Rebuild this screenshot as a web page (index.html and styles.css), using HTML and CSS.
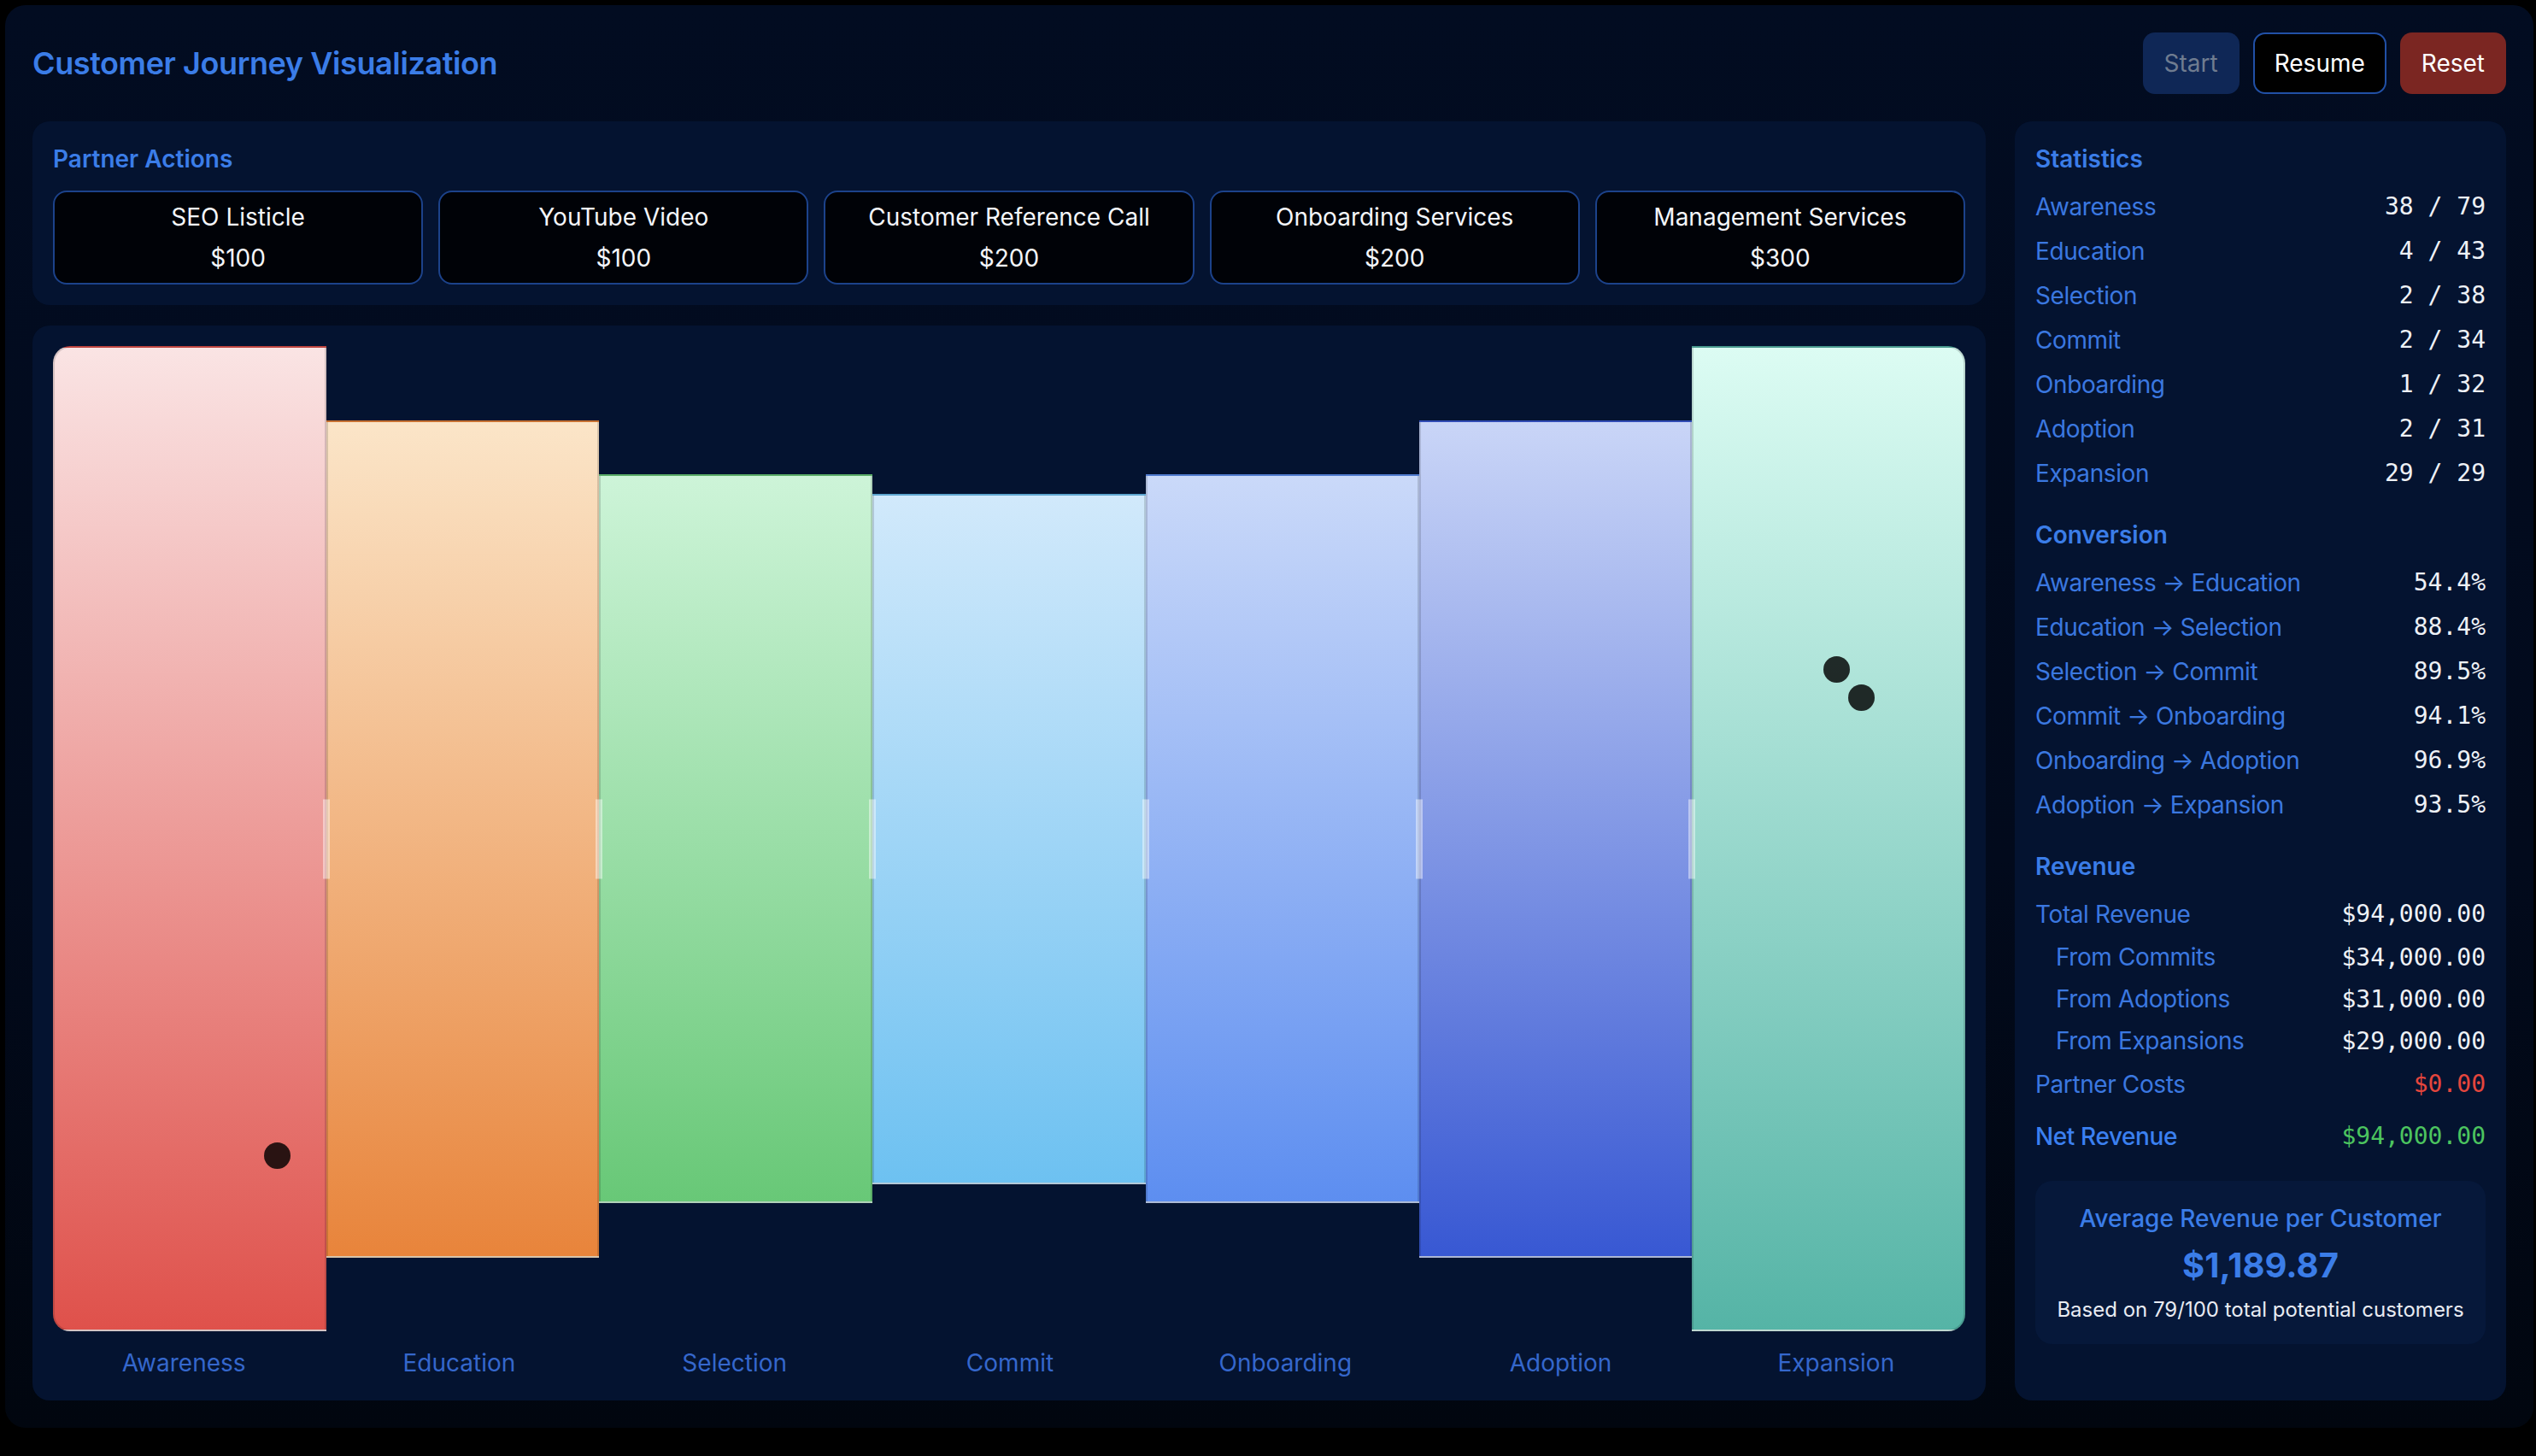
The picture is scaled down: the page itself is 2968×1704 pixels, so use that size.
FILE: index.html
```html
<!DOCTYPE html>
<html lang="en">
<head>
<meta charset="utf-8">
<title>Customer Journey Visualization</title>
<link rel="stylesheet" href="styles.css">
</head>
<body>
<div class="app">
  <header class="topbar">
    <h1 class="title">Customer Journey Visualization</h1>
    <div class="controls">
      <button class="btn btn-start">Start</button>
      <button class="btn btn-resume">Resume</button>
      <button class="btn btn-reset">Reset</button>
    </div>
  </header>

  <div class="main">
    <div class="left">
      <section class="panel partners">
        <h2 class="heading">Partner Actions</h2>
        <div class="actions">
          <div class="action"><div>SEO Listicle</div><div>$100</div></div>
          <div class="action"><div>YouTube Video</div><div>$100</div></div>
          <div class="action"><div>Customer Reference Call</div><div>$200</div></div>
          <div class="action"><div>Onboarding Services</div><div>$200</div></div>
          <div class="action"><div>Management Services</div><div>$300</div></div>
        </div>
      </section>

      <section class="panel funnel">
        <div class="bars">
          <div class="bar bar-awareness" style="height:1153px">
            <span class="dot" style="left:245px;top:930px"></span>
          </div>
          <div class="bar bar-education" style="height:980px"></div>
          <div class="bar bar-selection" style="height:853px"></div>
          <div class="bar bar-commit" style="height:808px"></div>
          <div class="bar bar-onboarding" style="height:853px"></div>
          <div class="bar bar-adoption" style="height:980px"></div>
          <div class="bar bar-expansion" style="height:1153px">
            <span class="dot" style="left:152px;top:361px"></span>
            <span class="dot" style="left:181px;top:394px"></span>
          </div>
        </div>
        <div class="labels">
          <span>Awareness</span>
          <span>Education</span>
          <span>Selection</span>
          <span>Commit</span>
          <span>Onboarding</span>
          <span>Adoption</span>
          <span>Expansion</span>
        </div>
      </section>
    </div>

    <aside class="panel stats">
      <div class="section">
        <h2 class="heading">Statistics</h2>
        <div class="row"><span class="k">Awareness</span><span class="v">38 / 79</span></div>
        <div class="row"><span class="k">Education</span><span class="v">4 / 43</span></div>
        <div class="row"><span class="k">Selection</span><span class="v">2 / 38</span></div>
        <div class="row"><span class="k">Commit</span><span class="v">2 / 34</span></div>
        <div class="row"><span class="k">Onboarding</span><span class="v">1 / 32</span></div>
        <div class="row"><span class="k">Adoption</span><span class="v">2 / 31</span></div>
        <div class="row"><span class="k">Expansion</span><span class="v">29 / 29</span></div>
      </div>
      <div class="section">
        <h2 class="heading">Conversion</h2>
        <div class="row"><span class="k">Awareness → Education</span><span class="v">54.4%</span></div>
        <div class="row"><span class="k">Education → Selection</span><span class="v">88.4%</span></div>
        <div class="row"><span class="k">Selection → Commit</span><span class="v">89.5%</span></div>
        <div class="row"><span class="k">Commit → Onboarding</span><span class="v">94.1%</span></div>
        <div class="row"><span class="k">Onboarding → Adoption</span><span class="v">96.9%</span></div>
        <div class="row"><span class="k">Adoption → Expansion</span><span class="v">93.5%</span></div>
      </div>
      <div class="section">
        <h2 class="heading">Revenue</h2>
        <div class="row"><span class="k">Total Revenue</span><span class="v">$94,000.00</span></div>
        <div class="row sub"><span class="k">From Commits</span><span class="v">$34,000.00</span></div>
        <div class="row sub"><span class="k">From Adoptions</span><span class="v">$31,000.00</span></div>
        <div class="row sub"><span class="k">From Expansions</span><span class="v">$29,000.00</span></div>
        <div class="row"><span class="k">Partner Costs</span><span class="v v-red">$0.00</span></div>
        <div class="row net"><span class="k">Net Revenue</span><span class="v v-green">$94,000.00</span></div>
      </div>
      <div class="avg">
        <div class="avg-title">Average Revenue per Customer</div>
        <div class="avg-value">$1,189.87</div>
        <div class="avg-note">Based on 79/100 total potential customers</div>
      </div>
    </aside>
  </div>
</div>
</body>
</html>
```

FILE: styles.css
```css
* {
  box-sizing: border-box;
  margin: 0;
  padding: 0;
}

html, body {
  background: #000;
}

body {
  font-family: Inter, "Noto Sans", sans-serif;
  color: #eef1f6;
}

.app {
  margin: 6px 3px 0 6px;
  padding: 32px;
  background: linear-gradient(180deg, #020c21 0%, #020a1c 60%, #01060f 100%);
  border-radius: 24px;
}

/* header */
.topbar {
  display: flex;
  align-items: center;
  justify-content: space-between;
  height: 72px;
}

.title {
  font-size: 36px;
  line-height: 44px;
  font-weight: 600;
  color: #3b7de8;
  letter-spacing: -0.4px;
}

.controls {
  display: flex;
  gap: 16px;
}

.btn {
  height: 72px;
  padding: 0 23px;
  border: 2px solid transparent;
  border-radius: 14px;
  font-family: Inter, "Noto Sans", sans-serif;
  font-size: 28px;
  cursor: pointer;
}

.btn-start {
  background: #0f2756;
  color: #6f7c90;
}

.btn-resume {
  background: #000;
  border-color: #2150a6;
  color: #fff;
}

.btn-reset {
  background: #7b2622;
  color: #fff;
}

/* layout */
.main {
  display: grid;
  grid-template-columns: 1fr 575px;
  column-gap: 34px;
  margin-top: 32px;
}

.left {
  display: flex;
  flex-direction: column;
  gap: 24px;
}

.panel {
  background: #041330;
  border-radius: 20px;
  padding: 24px;
}

.heading {
  font-size: 28px;
  line-height: 40px;
  font-weight: 600;
  color: #3b7de8;
}

/* partner actions */
.partners .heading {
  margin-bottom: 17px;
}

.actions {
  display: grid;
  grid-template-columns: repeat(5, 1fr);
  gap: 18px;
}

.action {
  background: #000207;
  border: 2px solid #1c428a;
  border-radius: 16px;
  padding: 5px;
  text-align: center;
  font-size: 28px;
  line-height: 48px;
  color: #f4f6fa;
}

/* funnel */
.funnel {
  flex: 1;
}

.bars {
  display: flex;
  align-items: center;
  height: 1153px;
}

.bar {
  flex: 1;
  position: relative;
  border: 2px solid rgba(0, 0, 0, 0.14);
}

.bar:not(:last-child)::after {
  content: "";
  position: absolute;
  z-index: 2;
  right: -6px;
  top: 50%;
  width: 8px;
  height: 93px;
  transform: translateY(-50%);
  background: rgba(255, 255, 255, 0.45);
}

.bar-awareness {
  border-radius: 20px 0 0 20px;
  background: linear-gradient(180deg, #fae4e4 0%, #df514b 100%);
}

.bar-education {
  background: linear-gradient(180deg, #fbe5c8 0%, #e8843b 100%);
}

.bar-selection {
  background: linear-gradient(180deg, #cdf4d8 0%, #68c877 100%);
}

.bar-commit {
  background: linear-gradient(180deg, #d1e9fb 0%, #6dc1f1 100%);
}

.bar-onboarding {
  background: linear-gradient(180deg, #cad9f9 0%, #5d8ef0 100%);
}

.bar-adoption {
  background: linear-gradient(180deg, #c9d5f7 0%, #3858d3 100%);
}

.bar-expansion {
  border-radius: 0 20px 20px 0;
  background: linear-gradient(180deg, #dcfcf3 0%, #55b4a6 100%);
}

.dot {
  position: absolute;
  width: 31px;
  height: 31px;
  border-radius: 50%;
  background: rgba(0, 0, 0, 0.82);
}

.labels {
  display: grid;
  grid-template-columns: repeat(7, 1fr);
  margin: 17px -10px 0 -8px;
}

.labels span {
  text-align: center;
  font-size: 28px;
  line-height: 40px;
  color: #3567cc;
}

/* stats */
.stats .heading {
  margin-bottom: 10px;
}

.section + .section {
  margin-top: 26px;
}

.row {
  display: flex;
  justify-content: space-between;
  font-size: 28px;
  line-height: 52px;
}

.row .k {
  color: #3b78e0;
  letter-spacing: -0.4px;
}

.row .v {
  font-family: "DejaVu Sans Mono", "Liberation Mono", monospace;
  color: #eef1f6;
}

.row.sub {
  line-height: 49px;
  padding-left: 24px;
}

.row.net {
  margin-top: 9px;
}

.row.net .k {
  font-weight: 500;
  color: #3b80f0;
}

.v.v-red {
  color: #e5463d;
}

.v.v-green {
  color: #4cc45f;
}

.avg {
  margin-top: 26px;
  background: #06183a;
  border-radius: 20px;
  padding: 26px 24px 24px;
  text-align: center;
}

.avg-title {
  font-size: 28px;
  line-height: 36px;
  font-weight: 500;
  color: #3b7de8;
  margin-bottom: 13px;
}

.avg-value {
  font-size: 40px;
  line-height: 48px;
  font-weight: 700;
  color: #3b7de8;
  margin-bottom: 12px;
}

.avg-note {
  font-size: 24px;
  line-height: 32px;
  color: #e8ebf2;
}
```
